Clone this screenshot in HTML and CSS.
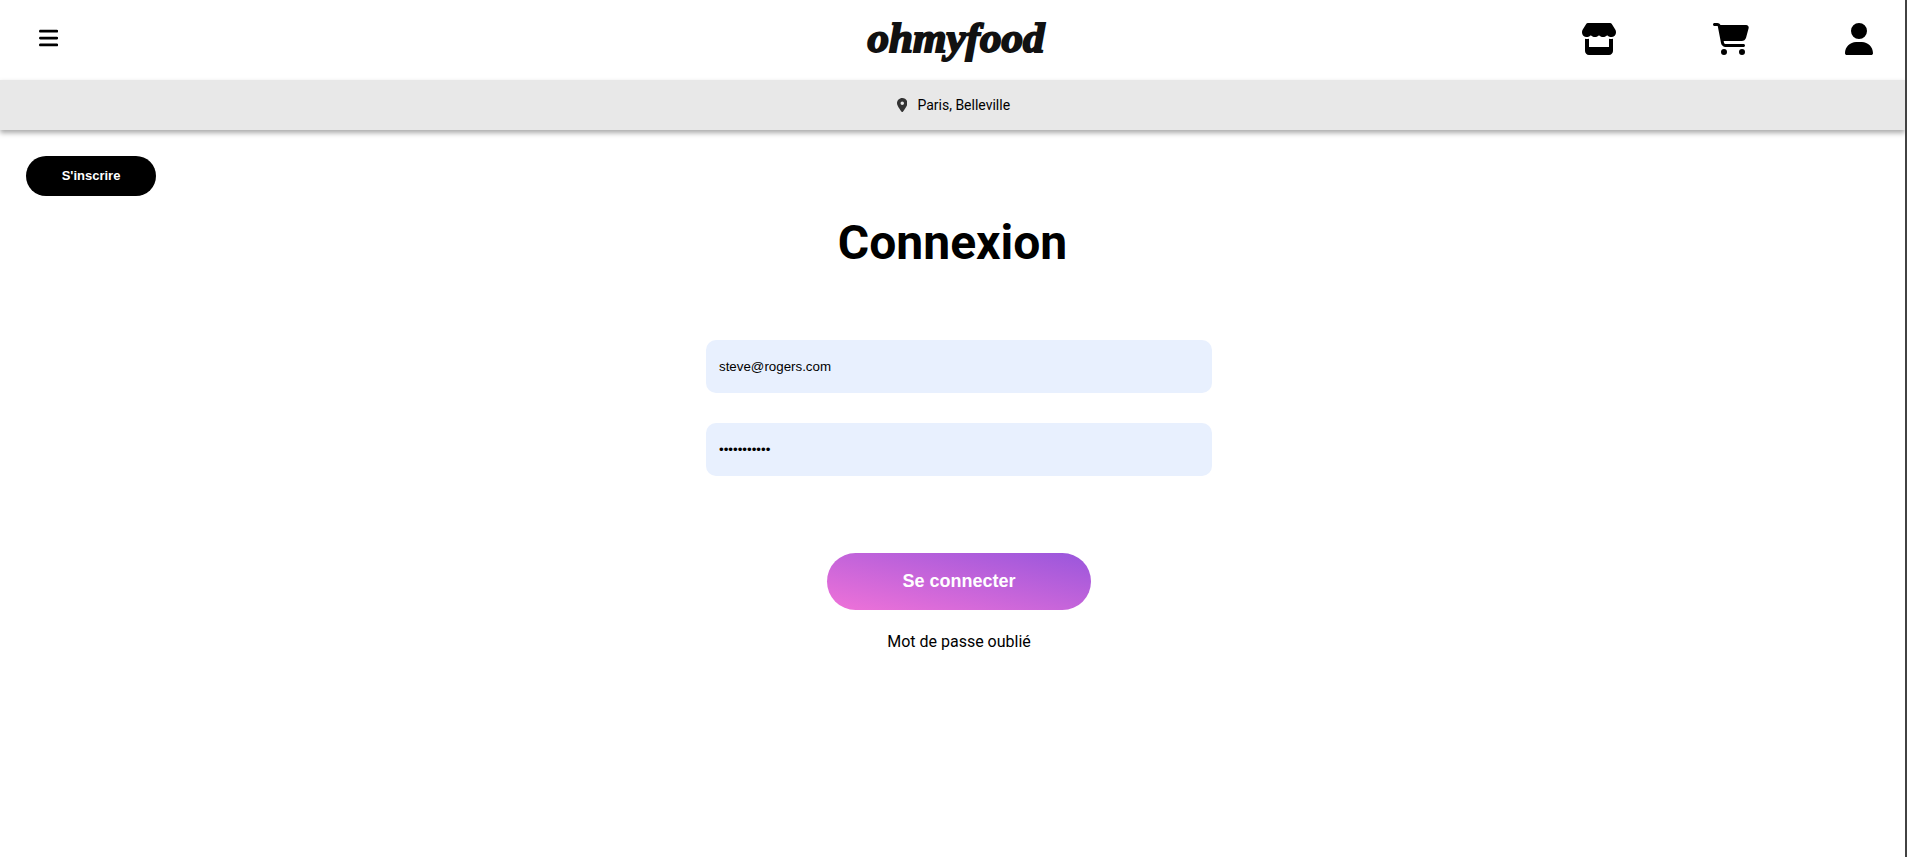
FILE: index.html
```html
<!DOCTYPE html>
<html lang="fr">
<head>
<meta charset="utf-8">
<title>Connexion - ohmyfood</title>
<link rel="stylesheet" href="styles.css">
</head>
<body>
<header class="header">
  <button class="icon-button menu" type="button" aria-label="Menu">
    <svg class="icon-menu" viewBox="0 0 448 512"><path d="M0 96C0 78.300 14.300 64 32 64H416c17.700 0 32 14.300 32 32s-14.300 32-32 32H32C14.300 128 0 113.700 0 96zM0 256c0-17.700 14.300-32 32-32H416c17.700 0 32 14.300 32 32s-14.300 32-32 32H32c-17.700 0-32-14.300-32-32zM448 416c0 17.700-14.300 32-32 32H32c-17.700 0-32-14.300-32-32s14.300-32 32-32H416c17.700 0 32 14.300 32 32z"/></svg>
  </button>
  <a class="logo" href="#">ohmyfood</a>
  <nav class="nav">
    <a href="#" aria-label="Restaurants"><svg class="icon" viewBox="0 0 576 512"><path d="M547.6 103.8L490.3 13.1C485.2 5 476.1 0 466.4 0H109.6C99.9 0 90.8 5 85.7 13.1L28.3 103.8c-29.6 46.8-3.4 111.9 51.9 119.4c4 .5 8.1 .8 12.1 .8c26.1 0 49.3-11.4 65.2-29c15.900 17.600 39.100 29 65.200 29c26.100 0 49.300-11.400 65.200-29c15.900 17.600 39.100 29 65.200 29c26.200 0 49.300-11.400 65.200-29c16 17.600 39.100 29 65.200 29c4.100 0 8.100-.3 12.100-.8c55.500-7.400 81.800-72.500 52.100-119.400zM499.700 254.900l-.1 0c-5.300 .7-10.700 1.100-16.200 1.100c-12.400 0-24.300-1.900-35.400-5.300V384H128V250.600c-11.200 3.500-23.200 5.400-35.600 5.400c-5.500 0-11-.4-16.300-1.100l-.1 0c-4.100-.6-8.100-1.300-12-2.300V384v64c0 35.300 28.700 64 64 64H448c35.300 0 64-28.700 64-64V384 252.600c-4 1-8 1.800-12.300 2.300z"/></svg></a>
    <a href="#" aria-label="Panier"><svg class="icon" viewBox="0 0 576 512"><path d="M0 24C0 10.700 10.700 0 24 0H69.500c22 0 41.500 12.800 50.600 32h411c26.300 0 45.500 25 38.600 50.400l-41 152.300c-8.500 31.400-37 53.300-69.500 53.300H170.700l5.400 28.500c2.200 11.300 12.100 19.500 23.600 19.500H488c13.300 0 24 10.700 24 24s-10.700 24-24 24H199.700c-34.600 0-64.300-24.600-70.700-58.500L77.400 54.500c-.7-3.800-4-6.500-7.900-6.500H24C10.700 48 0 37.300 0 24zM128 464a48 48 0 1 1 96 0 48 48 0 1 1 -96 0zm336-48a48 48 0 1 1 0 96 48 48 0 1 1 0-96z"/></svg></a>
    <a href="#" aria-label="Compte"><svg class="icon" viewBox="0 0 448 512"><path d="M224 256A128 128 0 1 0 224 0a128 128 0 1 0 0 256zm-45.700 48C79.800 304 0 383.800 0 482.300C0 498.700 13.300 512 29.700 512H418.300c16.400 0 29.700-13.300 29.700-29.700C448 383.800 368.200 304 269.700 304H178.300z"/></svg></a>
  </nav>
</header>
<div class="location">
  <svg class="icon-pin" viewBox="0 0 384 512"><path d="M215.700 499.200C267 435 384 279.400 384 192C384 86 298 0 192 0S0 86 0 192c0 87.400 117 243 168.300 307.200c12.300 15.300 35.100 15.300 47.400 0zM192 128a64 64 0 1 1 0 128 64 64 0 1 1 0-128z"/></svg>
  <span>Paris, Belleville</span>
</div>
<main class="main">
  <button class="signup" type="button">S'inscrire</button>
  <h1 class="title">Connexion</h1>
  <form class="form">
    <input class="field" type="email" value="steve@rogers.com" aria-label="Adresse e-mail" autocomplete="off">
    <input class="field" type="password" value="avengers123" aria-label="Mot de passe" autocomplete="off">
    <button class="submit" type="button">Se connecter</button>
    <a class="forgot" href="#">Mot de passe oublié</a>
  </form>
</main>
</body>
</html>
```
FILE: styles.css
```css
* {
  box-sizing: border-box;
}

body {
  margin: 0;
  min-height: 100vh;
  border-right: 2px solid #424242;
  background: #fff;
  color: #000;
  font-family: Roboto, sans-serif;
  overflow-x: hidden;
}

a {
  color: inherit;
  text-decoration: none;
}

svg {
  display: block;
  fill: currentColor;
}

.header {
  display: grid;
  grid-template-columns: 1fr auto 1fr;
  align-items: center;
  height: 80px;
  padding: 0 32px 2px 39px;
}

.icon-button {
  justify-self: start;
  padding: 0 0 2px;
  border: 0;
  background: none;
  color: inherit;
}

.icon-menu {
  height: 22px;
}

.logo {
  padding-bottom: 4px;
  color: #111;
  font: italic bold 43px/1 "Liberation Serif", serif;
  -webkit-text-stroke: 2px #111;
}

.nav {
  display: flex;
  justify-content: flex-end;
  gap: 96px;
}

.icon {
  height: 32px;
}

.location {
  display: flex;
  align-items: center;
  justify-content: center;
  gap: 10px;
  height: 50px;
  padding-left: 2px;
  background: #e8e8e8;
  box-shadow: 0 3px 5px #aaa;
  font-size: 14px;
}

.icon-pin {
  height: 14px;
  color: #333;
}

.main {
  padding: 26px;
}

.signup {
  display: block;
  width: 130px;
  height: 40px;
  padding-bottom: 2px;
  border: 0;
  border-radius: 20px;
  background: #000;
  color: #fff;
  font: bold 13px "Liberation Sans", Arial, sans-serif;
}

.title {
  margin: 19px 0 0;
  font-size: 48px;
  line-height: 56px;
  text-align: center;
}

.form {
  display: flex;
  flex-direction: column;
  align-items: center;
  padding: 69px 0 0 13px;
}

.field {
  width: 100%;
  max-width: 506px;
  height: 53px;
  margin-bottom: 30px;
  padding: 0 13px;
  border: 0;
  border-radius: 10px;
  background: #e8f0fe;
  color: #000;
  font-family: "Liberation Sans", Arial, sans-serif;
}

.submit {
  width: 264px;
  height: 57px;
  margin: 47px 0 22px;
  border: 0;
  border-radius: 29px;
  background: linear-gradient(to top right, #ef72d8, #9956dc);
  color: #fff;
  font: bold 18px "Liberation Sans", Arial, sans-serif;
}

.forgot {
  font-size: 16px;
}
```
